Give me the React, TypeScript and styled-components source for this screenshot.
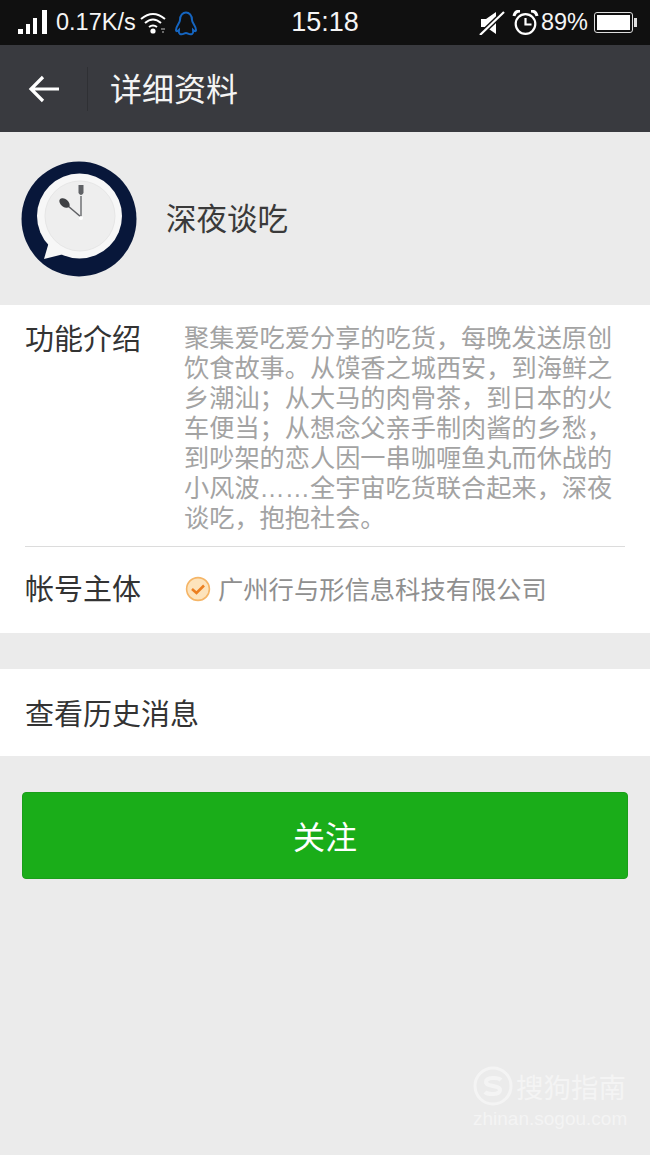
import React from 'react';
import styled, { createGlobalStyle } from 'styled-components';

const GlobalStyle = createGlobalStyle`
  html, body {
    margin: 0;
    padding: 0;
    background: #ebebeb;
  }
  body {
    font-family: "Liberation Sans", "Noto Sans CJK SC", sans-serif;
  }
`;

const intro =
  '聚集爱吃爱分享的吃货，每晚发送原创饮食故事。从馍香之城西安，到海鲜之乡潮汕；从大马的肉骨茶，到日本的火车便当；从想念父亲手制肉酱的乡愁，到吵架的恋人因一串咖喱鱼丸而休战的小风波……全宇宙吃货联合起来，深夜谈吃，抱抱社会。';

export default function App() {
  return (
    <Page>
      <GlobalStyle />
      <StatusBar>
        <StatusGroup>
          <svg width="30" height="26" viewBox="0 0 30 26">
            <rect x="0" y="19" width="5" height="5" fill="#fff" />
            <rect x="8" y="14" width="4" height="10" fill="#fff" />
            <rect x="15" y="8" width="4" height="16" fill="#fff" />
            <rect x="24" y="0" width="5" height="24" fill="#fff" />
          </svg>
          <Speed>0.17K/s</Speed>
          <svg width="27" height="22" viewBox="0 0 27 22" fill="none" stroke="#fff" strokeWidth="2">
            <path d="M1 7 Q13 -3 25 7" />
            <path d="M5 11 Q13 4 21 11" />
            <path d="M9 15 Q13 12 17 15" />
            <circle cx="13" cy="19" r="2.6" fill="#fff" stroke="none" />
            <path d="M21 17h4M22 20h2" stroke="#888" strokeWidth="1.4" />
          </svg>
          <QqIcon width="24" height="26" viewBox="0 0 24 26" fill="none" stroke="#1565c0" strokeWidth="2">
            <path d="M6 10 C6 0 18 0 18 10 C18 13 22 16 22 20 C22 22 20 21 19 20 C19 22 20 23 18 24 C15 25 14 23 12 23 C10 23 9 25 6 24 C4 23 5 22 5 20 C4 21 2 22 2 20 C2 16 6 13 6 10 Z" />
          </QqIcon>
        </StatusGroup>
        <Clock>15:18</Clock>
        <StatusRight>
          <MuteIcon width="26" height="24" viewBox="0 0 26 24">
            <path d="M2 8h5l10-7v22L7 16H2z" fill="#fff" />
            <path d="M1 24L25 1" stroke="#101010" strokeWidth="5" />
            <path d="M1 24L25 1" stroke="#fff" strokeWidth="2.2" />
          </MuteIcon>
          <svg width="27" height="25" viewBox="0 0 27 25" fill="none" stroke="#fff" strokeWidth="2.2">
            <circle cx="13.5" cy="14" r="9.8" />
            <path d="M13.5 8v6.5h6" />
            <path d="M2 6 Q3 1 8 1M19 1 Q24 1 25 6" strokeWidth="3" />
          </svg>
          <Percent>89%</Percent>
          <Battery>
            <BatteryFill />
          </Battery>
          <BatteryCap />
        </StatusRight>
      </StatusBar>

      <TitleBar>
        <BackButton>
          <svg width="32" height="28" viewBox="0 0 32 28" fill="none" stroke="#fff" strokeWidth="3.2">
            <path d="M31 14H3M15 2L3 14l12 12" />
          </svg>
        </BackButton>
        <TitleDivider />
        <Title>详细资料</Title>
      </TitleBar>

      <Profile>
        <Avatar width="116" height="116" viewBox="0 0 116 116">
          <circle cx="58" cy="58" r="57.5" fill="#08173a" />
          <path d="M23 98 L30 74 L47 92 Z" fill="#f7f7f7" />
          <circle cx="58.5" cy="55" r="42.5" fill="#f7f7f7" />
          <circle cx="59" cy="55" r="35" fill="#eeeeee" stroke="#e6e6e6" />
          <path d="M60 56V35" stroke="#77797c" strokeWidth="1.6" />
          <path d="M57.5 24v8q2.5 4 5 0v-8z" fill="#5f6165" />
          <path d="M60 56L47 45" stroke="#5f6064" strokeWidth="1.6" />
          <ellipse cx="43.5" cy="42" rx="3.8" ry="6" transform="rotate(-50 43.5 42)" fill="#3f4144" />
          <circle cx="60" cy="57" r="2" fill="#fff" />
        </Avatar>
        <Name>深夜谈吃</Name>
      </Profile>

      <InfoCard>
        <IntroRow>
          <Label>功能介绍</Label>
          <Intro>{intro}</Intro>
        </IntroRow>
        <Divider />
        <OwnerRow>
          <Label>帐号主体</Label>
          <Owner>
            <svg width="26" height="26" viewBox="0 0 26 26" fill="#fde3bb" stroke="#f5b567" strokeWidth="1.6">
              <circle cx="13" cy="13" r="11.4" />
              <path d="M7 13l4.5 4L19 9.5" fill="none" stroke="#ec7f20" strokeWidth="2.6" />
            </svg>
            <OwnerName>广州行与形信息科技有限公司</OwnerName>
          </Owner>
        </OwnerRow>
      </InfoCard>

      <HistoryRow>
        <HistoryText>查看历史消息</HistoryText>
      </HistoryRow>

      <FollowButton>
        <FollowText>关注</FollowText>
      </FollowButton>

      <Watermark>
        <WatermarkTop>
          <svg width="40" height="40" viewBox="0 0 40 40" fill="none" stroke="#f4f4f4" strokeWidth="3">
            <circle cx="20" cy="20" r="18" />
            <path d="M28 14c-3-3-15-3-15 2s14 3 14 8-12 5-15 2" strokeWidth="4" />
          </svg>
          <WatermarkName>搜狗指南</WatermarkName>
        </WatermarkTop>
        <WatermarkUrl>zhinan.sogou.com</WatermarkUrl>
      </Watermark>
    </Page>
  );
}

const Page = styled.div`
  position: relative;
  width: 650px;
  height: 1155px;
  overflow: hidden;
  background: #ebebeb;
`;

const StatusBar = styled.div`
  height: 45px;
  background: #101010;
  color: #f5f5f5;
  display: grid;
  grid-template-columns: 1fr auto 1fr;
  align-items: center;
  padding: 0 13px 0 18px;
  box-sizing: border-box;
`;

const StatusGroup = styled.div`
  display: flex;
  align-items: center;
  gap: 4px;
`;

const StatusRight = styled.div`
  display: flex;
  align-items: center;
  justify-content: flex-end;
  gap: 4px;
`;

const QqIcon = styled.svg`
  margin-left: 3px;
`;

const MuteIcon = styled.svg`
  margin-right: 3px;
`;

const Speed = styled.span`
  font-size: 23.5px;
  margin-left: 4px;
`;

const Percent = styled.span`
  font-size: 23.5px;
  margin-left: -2px;
`;

const Clock = styled.span`
  font-size: 27px;
  margin-right: 5px;
`;

const Battery = styled.div`
  width: 39px;
  height: 21px;
  border: 1.5px solid #ddd;
  border-radius: 3px;
  padding: 2px;
  box-sizing: border-box;
  margin-left: 2px;
`;

const BatteryFill = styled.div`
  width: 100%;
  height: 100%;
  background: #fff;
`;

const BatteryCap = styled.div`
  width: 3px;
  height: 9px;
  margin-left: -3px;
  background: #ddd;
`;

const TitleBar = styled.div`
  height: 87px;
  background: #393a3f;
  display: flex;
  align-items: center;
`;

const BackButton = styled.div`
  width: 87px;
  padding-left: 28px;
  box-sizing: border-box;
  display: flex;
`;

const TitleDivider = styled.div`
  width: 1px;
  height: 44px;
  background: #2f3034;
`;

const Title = styled.h1`
  margin: 0 0 3px 22px;
  font-size: 32px;
  font-weight: 400;
  color: #f4f4f4;
`;

const Profile = styled.div`
  height: 173px;
  display: flex;
  align-items: center;
  padding-left: 21px;
  gap: 29px;
`;

const Avatar = styled.svg`
  flex: none;
`;

const Name = styled.div`
  font-size: 30.5px;
  color: #3a3a3a;
  margin-bottom: 4px;
`;

const InfoCard = styled.div`
  background: #fff;
  height: 328px;
  padding: 0 25px;
`;

const IntroRow = styled.div`
  display: flex;
  height: 241px;
  padding-top: 18px;
  box-sizing: border-box;
`;

const Label = styled.div`
  flex: none;
  width: 159px;
  font-size: 29px;
  line-height: 34px;
  color: #333;
`;

const Intro = styled.div`
  width: 432px;
  font-size: 25.2px;
  line-height: 30px;
  color: #a3a3a3;
`;

const Divider = styled.div`
  height: 1px;
  width: 600px;
  background: #dcdcdc;
`;

const OwnerRow = styled.div`
  display: flex;
  align-items: center;
  height: 86px;
`;

const Owner = styled.div`
  display: flex;
  align-items: center;
  gap: 7px;
  margin: -3px 0 0 1px;
`;

const OwnerName = styled.span`
  font-size: 25.3px;
  color: #8f8f8f;
  margin-bottom: 1px;
`;

const HistoryRow = styled.div`
  margin-top: 36px;
  height: 87px;
  background: #fff;
  display: flex;
  align-items: center;
  padding-left: 25px;
`;

const HistoryText = styled.span`
  font-size: 29px;
  color: #333;
  margin-bottom: 2px;
`;

const FollowButton = styled.button`
  display: block;
  margin: 36px 0 0 22px;
  padding: 0 0 2px;
  width: 606px;
  height: 87px;
  border: 1px solid #1a9e1a;
  border-radius: 4px;
  background: #1aad19;
  color: #fff;
  font-family: inherit;
`;

const FollowText = styled.span`
  font-size: 32px;
`;

const Watermark = styled.div`
  position: absolute;
  left: 473px;
  top: 1066px;
  color: #f4f4f4;
`;

const WatermarkTop = styled.div`
  display: flex;
  align-items: center;
  gap: 3px;
`;

const WatermarkName = styled.span`
  font-size: 27.5px;
`;

const WatermarkUrl = styled.div`
  font-size: 19px;
  margin-top: 2px;
  white-space: nowrap;
`;
